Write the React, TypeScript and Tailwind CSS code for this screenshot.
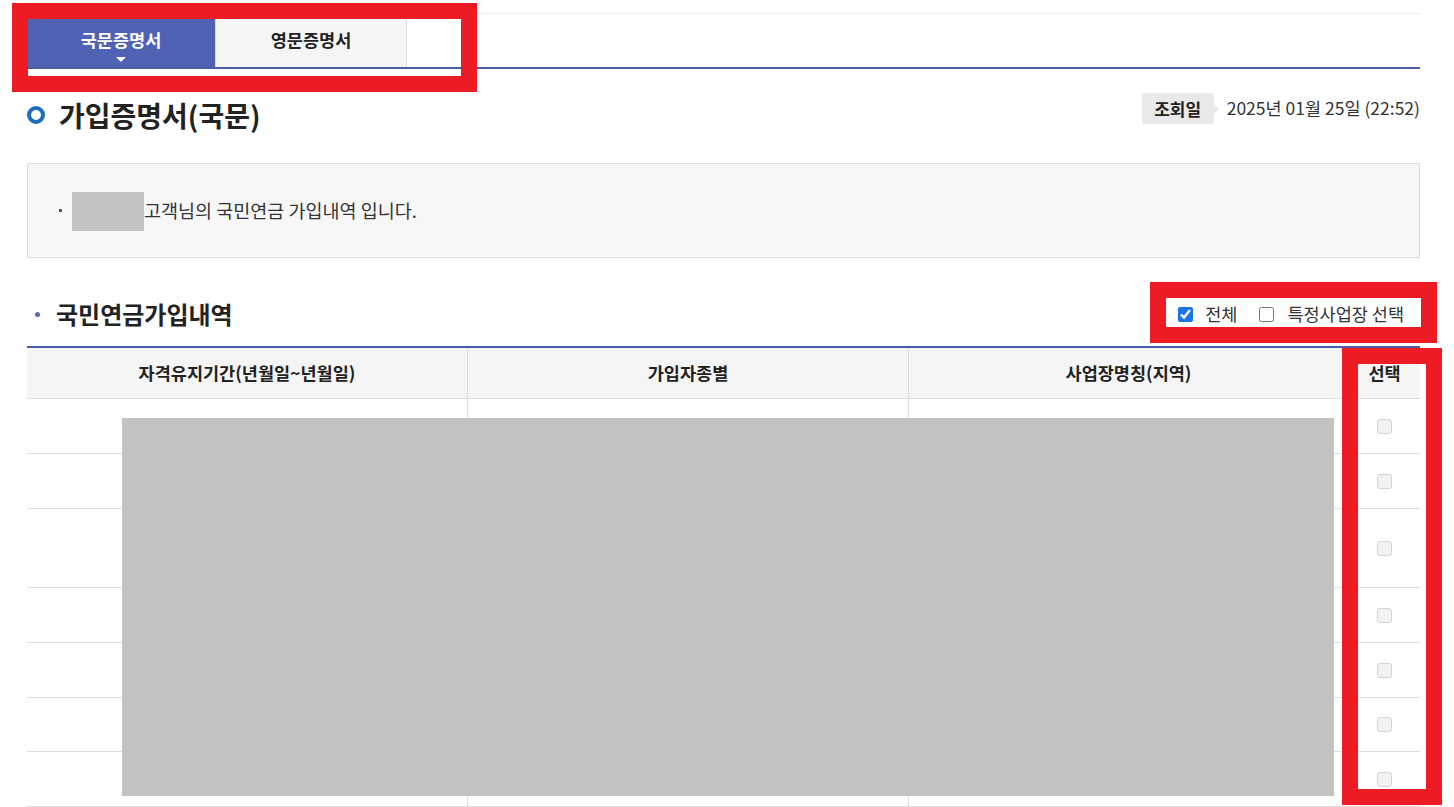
import React from "react";

const rows = [55, 55, 79, 55, 55, 54, 55];

const RowBox = () => (
  <span className="inline-block h-[15px] w-[15px] rounded-[3px] border border-[#d4d4d4] bg-[#f2f2f2]" />
);

const App = () => {
  return (
    <div className="relative h-[807px] w-[1454px] overflow-hidden bg-white text-[#222] [font-family:'Noto_Sans_CJK_KR','Noto_Sans',sans-serif]">
      <div className="ml-[27px] w-[1393px] pt-[13px]">
        <div className="border-t border-[#ececec]" />

        {/* tabs */}
        <div className="mt-[5px] flex h-[50px] border-b-2 border-[#4a5ea8]">
          <div className="relative flex w-[188px] items-center justify-center bg-[#4f62b4] pb-[6px] text-[17.5px] font-bold text-white">
            국문증명서
            <span className="absolute bottom-[5px] left-1/2 h-0 w-0 -translate-x-1/2 border-x-[5px] border-t-[5px] border-x-transparent border-t-white" />
          </div>
          <div className="flex w-[192px] items-center justify-center border-x border-[#dcdcdc] bg-[#f5f5f5] pb-[6px] text-[17.5px] font-bold text-[#222]">
            영문증명서
          </div>
        </div>

        {/* title */}
        <div className="mt-[24px] flex items-start justify-between">
          <div className="flex items-center gap-[14px] pt-[2px]">
            <span className="h-[18px] w-[18px] rounded-full border-[4px] border-[#1b6cc1]" />
            <h1 className="text-[28px] font-bold leading-[40px] text-[#222]">가입증명서(국문)</h1>
          </div>
          <div className="flex items-center">
            <div className="relative flex h-[31px] w-[72px] items-center justify-center rounded-[2px] bg-[#e9e9e9] text-[17px] font-bold text-[#222]">
              조회일
              <span className="absolute -right-[5px] top-1/2 h-0 w-0 -translate-y-1/2 border-y-[5px] border-l-[5px] border-y-transparent border-l-[#e9e9e9]" />
            </div>
            <span className="ml-[13px] text-[17.5px] text-[#333]">2025년 01월 25일 (22:52)</span>
          </div>
        </div>

        {/* info box */}
        <div className="mt-[28px] flex h-[95px] items-center border border-[#dcdcdc] bg-[#f7f7f7] pl-[31px]">
          <span className="mr-[10px] h-[3px] w-[3px] bg-[#555]" />
          <span className="mt-[2px] h-[39px] w-[72px] bg-[#c3c3c3]" />
          <span className="text-[18.5px] text-[#333]">고객님의 국민연금 가입내역 입니다.</span>
        </div>

        {/* section title */}
        <div className="mt-[37px] flex h-[38px] items-center justify-between">
          <div className="flex items-center">
            <span className="ml-[8px] h-[5px] w-[5px] rounded-full bg-[#5a6bb5]" />
            <h2 className="ml-[16px] text-[24px] font-bold text-[#222]">국민연금가입내역</h2>
          </div>
          <div className="mr-[16px] flex items-center text-[17.5px] text-[#333]">
            <input type="checkbox" defaultChecked className="h-[15px] w-[15px] accent-[#1a73e8]" />
            <span className="ml-[12px]">전체</span>
            <input type="checkbox" className="ml-[22px] h-[15px] w-[15px]" />
            <span className="ml-[13px]">특정사업장 선택</span>
          </div>
        </div>

        {/* table */}
        <div className="mt-[13px] border-t-2 border-[#4a5ea8]">
          <div className="flex h-[51px] border-b border-[#dedede] bg-[#f5f5f5] text-[17.5px] font-bold text-[#222]">
            <div className="flex w-[441px] items-center justify-center border-r border-[#dedede]">자격유지기간(년월일~년월일)</div>
            <div className="flex w-[441px] items-center justify-center border-r border-[#dedede]">가입자종별</div>
            <div className="flex w-[440px] items-center justify-center border-r border-[#dedede]">사업장명칭(지역)</div>
            <div className="flex flex-1 items-center justify-center">선택</div>
          </div>
          {rows.map((h, i) => (
            <div key={i} className="flex border-b border-[#dedede]" style={{ height: h }}>
              <div className="w-[441px] border-r border-[#dedede]" />
              <div className="w-[441px] border-r border-[#dedede]" />
              <div className="w-[440px] border-r border-[#dedede]" />
              <div className="flex flex-1 items-center justify-center">
                <RowBox />
              </div>
            </div>
          ))}
        </div>
      </div>

      {/* redaction */}
      <div className="absolute left-[122px] top-[418px] h-[378px] w-[1212px] bg-[#c3c3c3]" />

      {/* annotation boxes */}
      <div className="absolute left-[12px] top-[3px] h-[89px] w-[465px] border-[16px] border-[#ed1c24]" />
      <div className="absolute left-[1150px] top-[282px] h-[61px] w-[287px] border-[16px] border-[#ed1c24]" />
      <div className="absolute left-[1342px] top-[348px] h-[457px] w-[100px] border-[16px] border-[#ed1c24]" />
    </div>
  );
};

export default App;
